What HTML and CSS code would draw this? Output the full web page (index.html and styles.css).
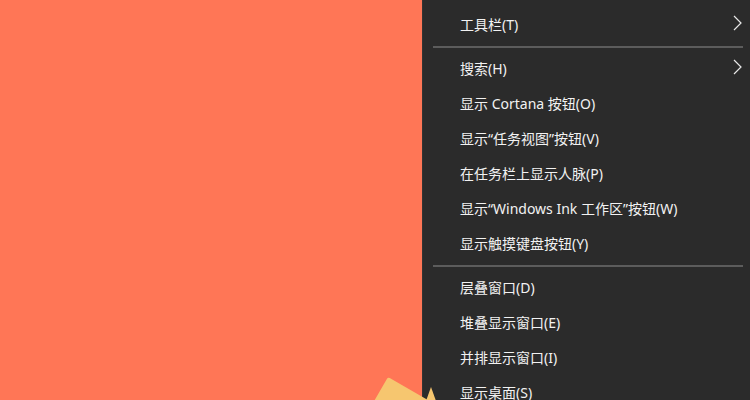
FILE: index.html
```html
<!DOCTYPE html>
<html lang="zh-CN">
<head>
  <meta charset="UTF-8">
  <meta name="viewport" content="width=device-width, initial-scale=1.0">
  <title>任务栏菜单</title>
  <link rel="stylesheet" href="styles.css">
</head>
<body>
  <div class="desktop">
    <div class="paper"></div>
  </div>

  <div class="menu">
    <div class="menu-item">
      <span>工具栏(T)</span>
      <svg class="chevron" width="9" height="16" viewBox="0 0 9 16"><polyline points="1,1 8,8 1,15" /></svg>
    </div>
    <div class="separator"></div>
    <div class="menu-item">
      <span>搜索(H)</span>
      <svg class="chevron" width="9" height="16" viewBox="0 0 9 16"><polyline points="1,1 8,8 1,15" /></svg>
    </div>
    <div class="menu-item"><span>显示 Cortana 按钮(O)</span></div>
    <div class="menu-item"><span>显示“任务视图”按钮(V)</span></div>
    <div class="menu-item"><span>在任务栏上显示人脉(P)</span></div>
    <div class="menu-item"><span>显示“Windows Ink 工作区”按钮(W)</span></div>
    <div class="menu-item"><span>显示触摸键盘按钮(Y)</span></div>
    <div class="separator"></div>
    <div class="menu-item"><span>层叠窗口(D)</span></div>
    <div class="menu-item"><span>堆叠显示窗口(E)</span></div>
    <div class="menu-item"><span>并排显示窗口(I)</span></div>
    <div class="menu-item"><span>显示桌面(S)</span></div>
  </div>

  <div class="paper-tip"></div>
</body>
</html>
```

FILE: styles.css
```css
body {
  margin: 0;
  width: 750px;
  height: 400px;
  overflow: hidden;
  display: flex;
  background-color: #ff7656;
  font-family: "Noto Sans", "Noto Sans CJK SC", sans-serif;
}
.desktop {
  flex: 1;
  position: relative;
}
.paper {
  position: absolute;
  left: 388px;
  top: 377px;
  width: 70px;
  height: 34px;
  background-color: #f6c66f;
  border-radius: 2px;
  transform-origin: top left;
  transform: rotate(30deg);
}
.menu {
  width: 328px;
  flex-shrink: 0;
  background-color: #2b2b2b;
  border-left: 1px solid #333;
  padding-top: 8px;
  box-sizing: border-box;
}
.menu-item {
  height: 35px;
  box-sizing: border-box;
  display: flex;
  align-items: center;
  justify-content: space-between;
  padding: 0 8px 3px 37px;
  color: #f2f2f2;
  font-size: 14px;
}
.chevron {
  fill: none;
  stroke: #e8e8e8;
  stroke-width: 1.2;
  margin-top: -2px;
}
.separator {
  height: 2px;
  margin: 3px 7px 4px 10px;
  background-color: #5c5c5c;
}
.paper-tip {
  position: absolute;
  left: 426px;
  top: 387px;
  width: 10px;
  height: 14px;
  background-color: #f6c66f;
  clip-path: polygon(50% 0, 100% 100%, 0 100%);
}
```
